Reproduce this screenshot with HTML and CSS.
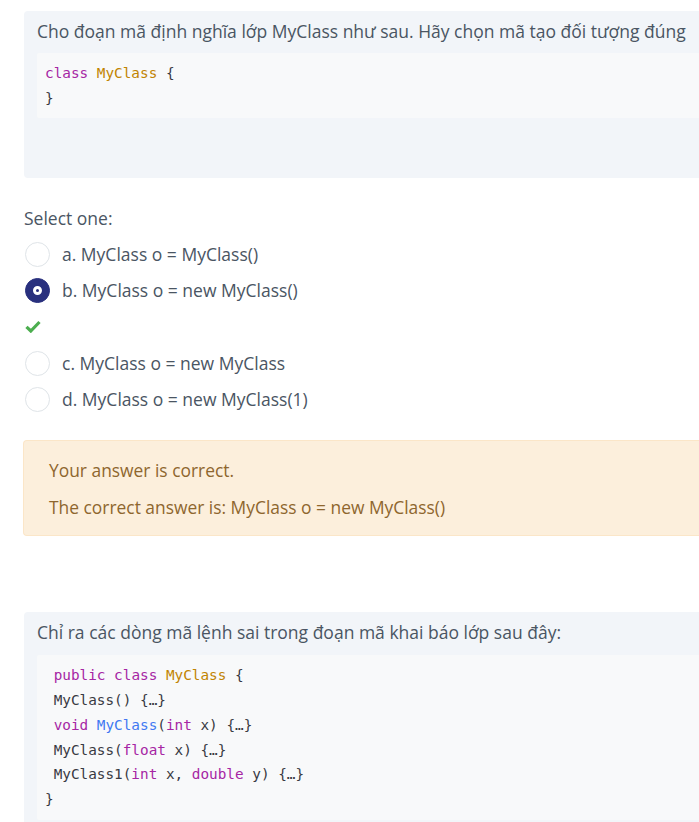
FILE: index.html
```html
<!DOCTYPE html>
<html lang="vi">
<head>
<meta charset="utf-8">
<link rel="stylesheet" href="styles.css">
</head>
<body>
<div class="page">
  <div class="formulation first">
    <p class="qtext">Cho đoạn mã định nghĩa lớp MyClass như sau. Hãy chọn mã tạo đối tượng đúng</p>
    <pre class="code"><span class="kw">class</span> <span class="title">MyClass</span> {
}</pre>
  </div>

  <div class="answers">
    <div class="prompt">Select one:</div>
    <div class="option"><span class="radio"></span><span class="label">a. MyClass o = MyClass()</span></div>
    <div class="option"><span class="radio checked"><span class="dot"></span></span><span class="label">b. MyClass o = new MyClass()</span></div>
    <div class="option check-row">
      <svg class="check" width="16" height="13" viewBox="0 0 16 13"><path d="M1.5 6.8 L5.8 11 L14.5 2" fill="none" stroke="#4cae4f" stroke-width="3.2" stroke-linejoin="miter"/></svg>
    </div>
    <div class="option"><span class="radio"></span><span class="label">c. MyClass o = new MyClass</span></div>
    <div class="option"><span class="radio"></span><span class="label">d. MyClass o = new MyClass(1)</span></div>
  </div>

  <div class="outcome">
    <div class="fb">Your answer is correct.</div>
    <div class="fb">The correct answer is: MyClass o = new MyClass()</div>
  </div>

  <div class="formulation second">
    <p class="qtext">Chỉ ra các dòng mã lệnh sai trong đoạn mã khai báo lớp sau đây:</p>
    <pre class="code"> <span class="kw">public</span> <span class="kw">class</span> <span class="title">MyClass</span> {
 MyClass() {…}
 <span class="kw">void</span> <span class="fn">MyClass</span>(<span class="kw">int</span> x) {…}
 MyClass(<span class="kw">float</span> x) {…}
 MyClass1(<span class="kw">int</span> x, <span class="kw">double</span> y) {…}
}</pre>
  </div>
</div>
</body>
</html>
```
FILE: styles.css
```css
html, body {
  margin: 0;
  padding: 0;
  background: #ffffff;
  overflow: hidden;
}
body {
  font-family: "Open Sans", "Noto Sans", sans-serif;
  color: #4a5563;
}
.page {
  padding: 11px 0 0 24px;
}
.formulation {
  background: #f2f5f9;
  border-radius: 4px 0 0 4px;
  padding: 7px 0 0 13px;
}
.first {
  height: 160px;
}
.second {
  margin-top: 76px;
  padding-bottom: 8px;
}
.qtext {
  margin: 0;
  font-size: 17.5px;
  line-height: 26px;
  color: #4a5563;
  white-space: nowrap;
}
.code {
  margin: 9px 0 0 0;
  background: #f8f9fa;
  padding: 8px 8px 8px;
  font-family: "DejaVu Sans Mono", "Liberation Mono", monospace;
  font-size: 14.35px;
  line-height: 24.7px;
  color: #383a42;
  border-radius: 2px 0 0 2px;
}
.second .code {
  margin-top: 10px;
}
.kw { color: #a626a4; }
.title { color: #c18401; }
.fn { color: #4078f2; }

.answers {
  margin-top: 27px;
}
.prompt {
  font-size: 17.5px;
  line-height: 26px;
  color: #4a5563;
  margin-bottom: 5px;
}
.option {
  display: flex;
  align-items: center;
  height: 36.3px;
  font-size: 17.5px;
  color: #4a5563;
}
.radio {
  box-sizing: border-box;
  width: 25px;
  height: 25px;
  border-radius: 50%;
  border: 1px solid #dfe4e8;
  background: #fff;
  margin-left: 1px;
  margin-right: 12px;
  flex-shrink: 0;
  display: flex;
  align-items: center;
  justify-content: center;
}
.radio.checked {
  background: #29307e;
  border-color: #29307e;
}
.dot {
  box-sizing: border-box;
  width: 9px;
  height: 9px;
  border-radius: 50%;
  background: #29307e;
  border: 3px solid #ffffff;
}
.check-row {
  padding-left: 1px;
}
.outcome {
  margin-top: 23px;
  margin-left: -1px;
  background: #fcefdc;
  border: 1px solid #fbe6c8;
  border-right: none;
  border-radius: 4px 0 0 4px;
  padding: 16px 25px 15px;
  color: #8e662e;
  font-size: 17.4px;
}
.fb {
  line-height: 26px;
}
.fb + .fb {
  margin-top: 11px;
}
```
